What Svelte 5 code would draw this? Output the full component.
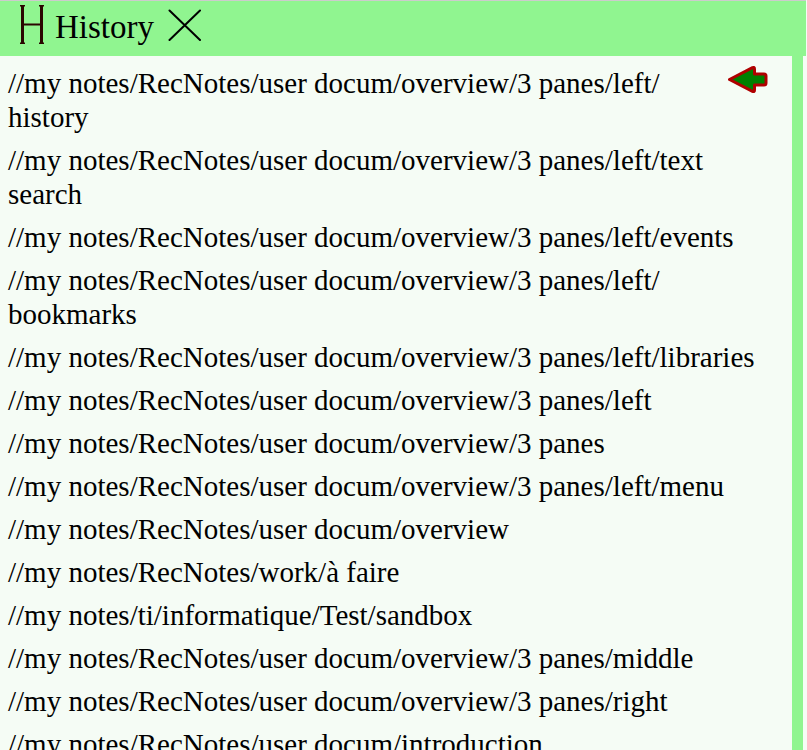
<script>
  const entries = [
    'RecNotes/user docum/overview/3 panes/left/history',
    'RecNotes/user docum/overview/3 panes/left/text search',
    'RecNotes/user docum/overview/3 panes/left/events',
    'RecNotes/user docum/overview/3 panes/left/bookmarks',
    'RecNotes/user docum/overview/3 panes/left/libraries',
    'RecNotes/user docum/overview/3 panes/left',
    'RecNotes/user docum/overview/3 panes',
    'RecNotes/user docum/overview/3 panes/left/menu',
    'RecNotes/user docum/overview',
    'RecNotes/work/à faire',
    'ti/informatique/Test/sandbox',
    'RecNotes/user docum/overview/3 panes/middle',
    'RecNotes/user docum/overview/3 panes/right',
    'RecNotes/user docum/introduction'
  ];
  let current = $state(0);
  let open = $state(true);

  // A zero-width space after each slash lets long paths wrap there.
  const label = (entry) => '//my notes/' + entry.replaceAll('/', '/\u200b');
</script>

<section class="panel">
  <header>
    <svg class="logo" viewBox="0 0 26 40" aria-hidden="true">
      <path d="M1 0H6V1L5 2V37L6 38V39H1V38L2 37V2L1 1ZM20 0H25V1L24 2V37L25 38V39H20V38L21 37V2L20 1ZM5 18.5H21V20.5H5Z" />
    </svg>
    <h1>History</h1>
    <button type="button" aria-label="Close" onclick={() => (open = false)}>
      <svg viewBox="0 0 34 32" aria-hidden="true">
        <path d="M1.5 1.5L32 31M32 1.5L1.5 31" />
      </svg>
    </button>
  </header>
  {#if open}
    <div class="body">
      <ul>
        {#each entries as entry, i}
          <li>
            <a href="#note-{i}" onclick={() => (current = i)}>{label(entry)}</a>
            {#if i === current}
              <svg class="arrow" viewBox="0 0 40 28" aria-hidden="true">
                <path d="M1.5 13.5L24.5 1.7Q26.5 .8 26.5 3V8H36Q38 8 38 10V17Q38 19 36 19H26.5V24Q26.5 26.3 24.5 25.3Z" />
              </svg>
            {/if}
          </li>
        {/each}
      </ul>
    </div>
  {/if}
</section>

<style>
  :global(body) {
    margin: 0;
    background: #f5fcf5;
  }

  .panel {
    box-sizing: border-box;
    height: 100vh;
    overflow: hidden;
    display: flex;
    flex-direction: column;
    margin-right: 1px;
    border-top: 1px solid #cccccc;
    font-family: "Liberation Serif", "Times New Roman", serif;
    font-size: 29px;
    line-height: 34px;
    color: #000;
  }

  header {
    box-sizing: border-box;
    flex: none;
    display: flex;
    align-items: flex-start;
    height: 55px;
    padding: 4px 19px;
    background: #90f590;
  }

  .logo {
    width: 26px;
    height: 40px;
    margin-right: 10px;
    fill: #2a0500;
  }

  h1 {
    margin: 5px 14px 0 0;
    font-size: 33px;
    font-weight: 400;
    line-height: 34px;
  }

  button {
    margin: 4px 0 0;
    padding: 0;
    border: 0;
    background: none;
    cursor: pointer;
  }

  button svg {
    display: block;
    width: 34px;
    height: 32px;
    fill: none;
    stroke: #000;
    stroke-width: 2;
    stroke-linecap: round;
  }

  .body {
    flex: 1;
    min-height: 0;
    margin-right: 3px;
    border-right: 11px solid #90f590;
    overflow: hidden;
  }

  ul {
    margin: 0;
    padding: 10px 24px 0 8px;
    list-style: none;
  }

  li {
    display: flex;
    align-items: flex-start;
    justify-content: space-between;
    margin-bottom: 9px;
  }

  a {
    color: inherit;
    text-decoration: none;
  }

  .arrow {
    flex: none;
    width: 40px;
    height: 28px;
    fill: #008000;
    stroke: #b00000;
    stroke-width: 3;
    stroke-linejoin: round;
  }
</style>
